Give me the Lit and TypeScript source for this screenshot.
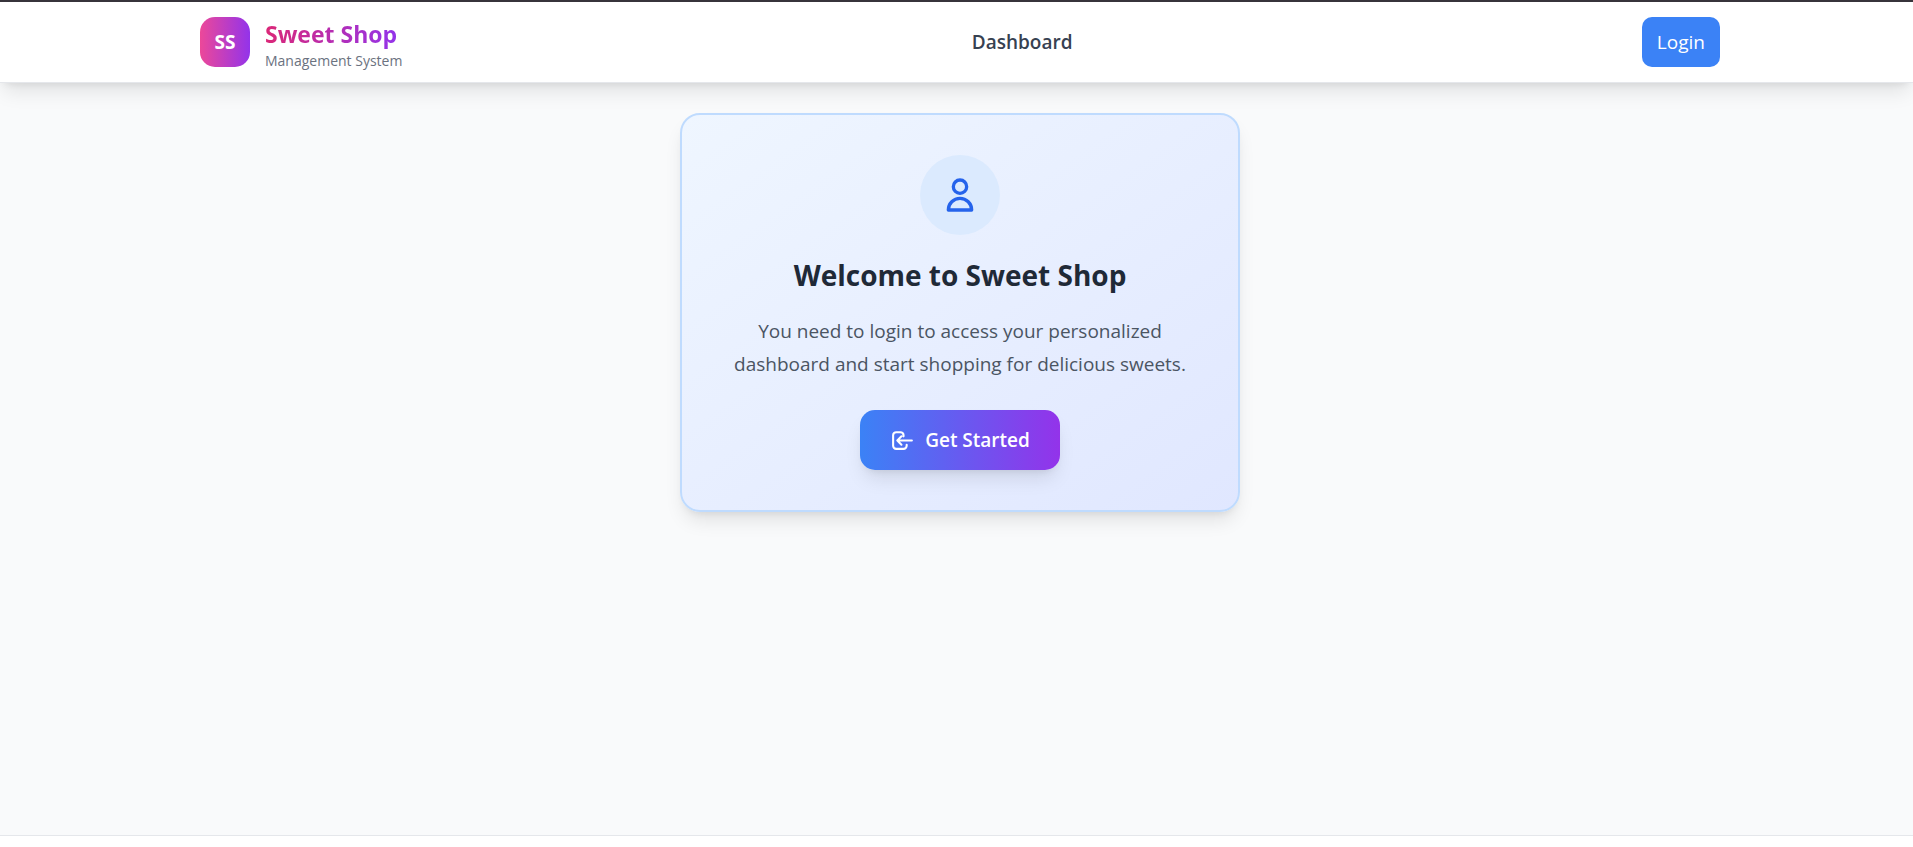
import { LitElement, html, css, svg } from "lit";
import { customElement } from "lit/decorators.js";

const userIcon = svg`<path d="M16 7a4 4 0 11-8 0 4 4 0 018 0zM12 14a7 7 0 00-7 7h14a7 7 0 00-7-7z" />`;
const enterIcon = svg`<path d="M11 16l-4-4m0 0l4-4m-4 4h14m-5 4v1a3 3 0 01-3 3H6a3 3 0 01-3-3V7a3 3 0 013-3h4a3 3 0 013 3v1" />`;

@customElement("shop-header")
class ShopHeader extends LitElement {
  static styles = css`
    :host { display: block; position: relative; }
    header {
      padding-left: 7px;
      background: #fff;
      border-top: 2px solid #37343b;
      border-bottom: 1px solid #e5e7eb;
      box-shadow: 0 12px 19px -4px rgb(0 0 0 / 0.1), 0 5px 8px -5px rgb(0 0 0 / 0.1);
    }
    .bar {
      box-sizing: border-box;
      max-width: 1600px;
      height: 80px;
      margin: 0 auto;
      padding: 0 40px;
      display: flex;
      align-items: center;
      justify-content: space-between;
    }
    a { text-decoration: none; }
    .brand { display: flex; align-items: center; gap: 15px; }
    .logo {
      width: 50px; height: 50px; border-radius: 15px;
      display: flex; align-items: center; justify-content: center;
      background: linear-gradient(to right, #ec4899, #9333ea);
      color: #fff; font-weight: 700; font-size: 19px;
    }
    .names { display: flex; flex-direction: column; padding-top: 3px; }
    .name {
      align-self: flex-start;
      font-size: 23px; line-height: 34px; font-weight: 700;
      background: linear-gradient(to right, #db2777, #9333ea);
      background-clip: text; -webkit-background-clip: text; color: transparent;
    }
    .sub { font-size: 14px; line-height: 20px; color: #6b7280; }
    .link { font-size: 19px; line-height: 30px; font-weight: 600; color: #374151; }
    .login {
      font: inherit; font-size: 19px; line-height: 30px; color: #fff;
      background: #3b82f6; border: 0; border-radius: 10px; padding: 10px 15px;
    }
  `;
  render() {
    return html`<header>
      <div class="bar">
        <a class="brand" href="#">
          <span class="logo">SS</span>
          <span class="names">
            <span class="name">Sweet Shop</span>
            <span class="sub">Management System</span>
          </span>
        </a>
        <nav><a class="link" href="#dashboard">Dashboard</a></nav>
        <button class="login" type="button">Login</button>
      </div>
    </header>`;
  }
}

@customElement("welcome-card")
class WelcomeCard extends LitElement {
  static styles = css`
    :host { display: block; width: 100%; max-width: 560px; }
    .card {
      box-sizing: border-box;
      padding: 40px;
      display: flex; flex-direction: column; align-items: center;
      text-align: center;
      border: 2px solid #bfdbfe;
      border-radius: 20px;
      background: linear-gradient(to bottom right, #eff6ff, #e0e7ff);
      box-shadow: 0 12px 19px -4px rgb(0 0 0 / 0.1), 0 5px 8px -5px rgb(0 0 0 / 0.1);
    }
    .avatar {
      width: 80px; height: 80px; border-radius: 50%;
      display: flex; align-items: center; justify-content: center;
      background: #dbeafe; color: #2563eb;
    }
    svg { fill: none; stroke: currentColor; stroke-width: 2; stroke-linecap: round; stroke-linejoin: round; }
    .user { width: 40px; height: 40px; }
    .enter { width: 25px; height: 25px; }
    h1 { margin: 20px 0; font-size: 28px; line-height: 40px; font-weight: 700; color: #1f2937; }
    p { margin: 0 0 29px; font-size: 19px; line-height: 33px; color: #4b5563; }
    button {
      display: flex; align-items: center; gap: 10px;
      padding: 15px 30px; border: 0; border-radius: 15px;
      font: inherit; font-size: 19px; line-height: 30px; font-weight: 600; color: #fff;
      background: linear-gradient(to right, #3b82f6, #9333ea);
      box-shadow: 0 12px 19px -4px rgb(0 0 0 / 0.1), 0 5px 8px -5px rgb(0 0 0 / 0.1);
    }
  `;
  render() {
    return html`<section class="card">
      <div class="avatar"><svg class="user" viewBox="0 0 24 24" aria-hidden="true">${userIcon}</svg></div>
      <h1>Welcome to Sweet Shop</h1>
      <p>You need to login to access your personalized dashboard and start shopping for delicious sweets.</p>
      <button type="button">
        <svg class="enter" viewBox="0 0 24 24" aria-hidden="true">${enterIcon}</svg>
        Get Started
      </button>
    </section>`;
  }
}

@customElement("app-root")
class AppRoot extends LitElement {
  static styles = css`
    :host {
      display: flex; flex-direction: column;
      min-height: 100vh;
      background: #f9fafb;
      font-family: "Segoe UI", "Open Sans", "Noto Sans", sans-serif;
    }
    main { flex: 1; display: flex; align-items: flex-start; justify-content: center; padding: 30px 20px 30px 27px; }
    footer { height: 11px; background: #fff; border-top: 1px solid #e5e7eb; }
  `;
  render() {
    return html`<shop-header></shop-header>
      <main><welcome-card></welcome-card></main>
      <footer></footer>`;
  }
}
